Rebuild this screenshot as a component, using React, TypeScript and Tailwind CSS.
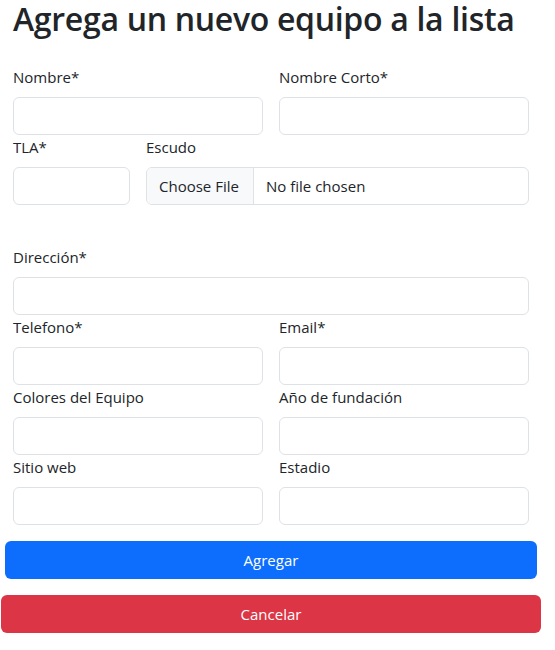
export default function App() {
  const label = 'block h-6 mb-2 text-[15px] leading-6 text-[#212529]';
  const input = 'block w-full h-[38px] rounded-[6px] border border-[#dee2e6] bg-white';

  return (
    <div className="w-[555px] min-h-[650px] bg-white font-['Open_Sans',sans-serif] text-[#212529]">
      <h1 className="pl-[13px] pt-px text-[32px] leading-[36px] font-semibold text-[#212529] tracking-[-0.3px] whitespace-nowrap">
        Agrega un nuevo equipo a la lista
      </h1>

      <form className="pt-7" onSubmit={e => e.preventDefault()}>
        <div className="pl-[13px] w-[529px]">
          {/* Nombre / Nombre corto */}
          <div className="grid grid-cols-2 gap-x-4">
            <div>
              <label className={label}>Nombre*</label>
              <div className={input} />
            </div>
            <div>
              <label className={label}>Nombre Corto*</label>
              <div className={input} />
            </div>
          </div>

          {/* TLA / Escudo */}
          <div className="flex gap-4">
            <div className="w-[117px] shrink-0">
              <label className={label}>TLA*</label>
              <div className={input} />
            </div>
            <div className="flex-1">
              <label className={label}>Escudo</label>
              <div className="flex h-[38px] rounded-[6px] border border-[#dee2e6] overflow-hidden text-[15px]">
                <span className="flex items-center px-3 w-[107px] bg-[#f8f9fa] border-r border-[#dee2e6] whitespace-nowrap">
                  Choose File
                </span>
                <span className="flex items-center px-3 whitespace-nowrap">No file chosen</span>
              </div>
            </div>
          </div>

          {/* Direccion */}
          <div className="mt-10">
            <label className={label}>Dirección*</label>
            <div className={input} />
          </div>

          <div className="grid grid-cols-2 gap-x-4">
            <div>
              <label className={label}>Telefono*</label>
              <div className={input} />
            </div>
            <div>
              <label className={label}>Email*</label>
              <div className={input} />
            </div>
            <div>
              <label className={label}>Colores del Equipo</label>
              <div className={input} />
            </div>
            <div>
              <label className={label}>Año de fundación</label>
              <div className={input} />
            </div>
            <div>
              <label className={label}>Sitio web</label>
              <div className={input} />
            </div>
            <div>
              <label className={label}>Estadio</label>
              <div className={input} />
            </div>
          </div>
        </div>

        <div className="pl-[5px] w-[537px] mt-4">
          <button type="submit" className="w-full h-[38px] rounded-[6px] bg-[#0d6efd] text-white text-[15px]">
            Agregar
          </button>
        </div>
        <div className="pl-px w-[541px] mt-4">
          <button type="button" className="w-full h-[38px] rounded-[6px] bg-[#dc3545] text-white text-[15px]">
            Cancelar
          </button>
        </div>
      </form>
    </div>
  );
}
